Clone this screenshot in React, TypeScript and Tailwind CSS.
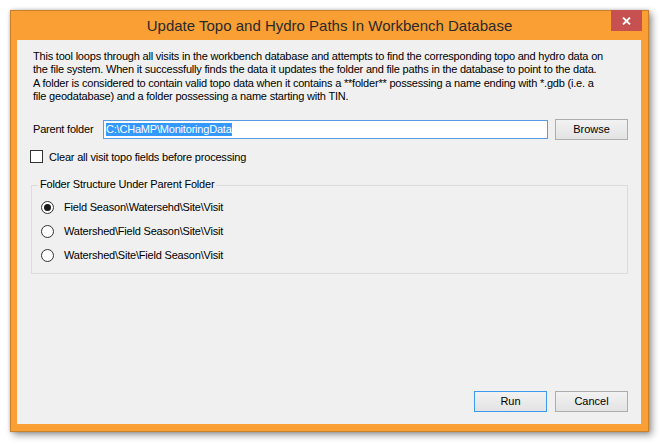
import React from "react";

const font = { fontFamily: '"Liberation Sans", Arial, sans-serif' };

function Radio({ checked, label }: { checked?: boolean; label: string }) {
  return (
    <div className="flex items-center h-[24px]">
      <span className="ml-[9px] w-[13px] h-[13px] rounded-full border border-[#333] bg-white flex items-center justify-center">
        {checked && <span className="w-[7px] h-[7px] rounded-full bg-[#1a1a1a]" />}
      </span>
      <span className="ml-[10px] text-[11px] leading-[13px] tracking-[-0.2px] text-black">{label}</span>
    </div>
  );
}

function Button({ label, primary }: { label: string; primary?: boolean }) {
  return (
    <div
      className={`w-[73px] h-[21px] flex items-center justify-center text-[11px] text-black border bg-gradient-to-b from-[#f2f2f2] to-[#e3e3e3] ${
        primary ? "border-[#3c9aee]" : "border-[#adadad]"
      }`}
    >
      {label}
    </div>
  );
}

export default function App() {
  return (
    <div className="w-[660px] h-[444px] bg-white pt-[10px] pl-[10px]" style={font}>
      <div className="w-[639px] h-[422px] bg-[#f99f33] border border-[#c8802a] flex flex-col shadow-[0_0_3px_rgba(0,0,0,0.2),3px_3px_7px_rgba(0,0,0,0.4)]">
        <div className="relative h-[29px] flex items-center justify-center">
          <span className="text-[15px] text-[#2a2a2a] pt-[1px]">
            Update Topo and Hydro Paths In Workbench Database
          </span>
          <div className="absolute top-[-1px] right-[6px] w-[31px] h-[21px] bg-[#c75050] flex items-center justify-center">
            <svg width="9" height="8" viewBox="0 0 9 8">
              <path d="M1 0.5 L8 7.5 M8 0.5 L1 7.5" stroke="#fff" strokeWidth="1.8" />
            </svg>
          </div>
        </div>
        <div className="ml-[6px] mr-[7px] mb-[7px] flex-1 bg-[#f0f0f0] flex flex-col pt-[10px] pb-[12px]">
          <div className="pl-[16px] text-[11px] leading-[13px] tracking-[-0.2px] text-black">
            <p>
              This tool loops through all visits in the workbench database and attempts to find the corresponding topo and hydro data on
              <br />
              the file system. When it successfully finds the data it updates the folder and file paths in the database to point to the data.
            </p>
            <p className="mt-[1px]">
              A folder is considered to contain valid topo data when it contains a **folder** possessing a name ending with *.gdb (i.e. a
              <br />
              file geodatabase) and a folder possessing a name starting with TIN.
            </p>
          </div>

          <div className="mt-[16px] flex items-center h-[21px] pl-[16px]">
            <span className="w-[70px] text-[11px] tracking-[-0.2px] text-black">Parent folder</span>
            <div className="w-[445px] h-[19px] bg-white border border-[#569de5] flex items-center pl-[2px]">
              <span className="bg-[#3399ff] text-white text-[11px] leading-[13px] tracking-[-0.2px]">C:\CHaMP\MonitoringData</span>
            </div>
            <div className="ml-[7px]">
              <Button label="Browse" />
            </div>
          </div>

          <div className="mt-[10px] flex items-center pl-[13px] h-[13px]">
            <span className="w-[13px] h-[13px] border border-[#333] bg-white" />
            <span className="ml-[6px] pt-[1px] text-[11px] leading-[13px] tracking-[-0.2px] text-black">
              Clear all visit topo fields before processing
            </span>
          </div>

          <div className="relative mt-[22px] ml-[14px] w-[597px] h-[89px] border border-[#dcdcdc] pt-[9px]">
            <span className="absolute top-[-8px] left-[6px] px-[2px] bg-[#f0f0f0] text-[11px] leading-[13px] tracking-[-0.2px] text-black">
              Folder Structure Under Parent Folder
            </span>
            <Radio checked label="Field Season\Watersehd\Site\Visit" />
            <Radio label="Watershed\Field Season\Site\Visit" />
            <Radio label="Watershed\Site\Field Season\Visit" />
          </div>

          <div className="mt-auto flex justify-end gap-[8px] pr-[13px]">
            <Button label="Run" primary />
            <Button label="Cancel" />
          </div>
        </div>
      </div>
    </div>
  );
}
